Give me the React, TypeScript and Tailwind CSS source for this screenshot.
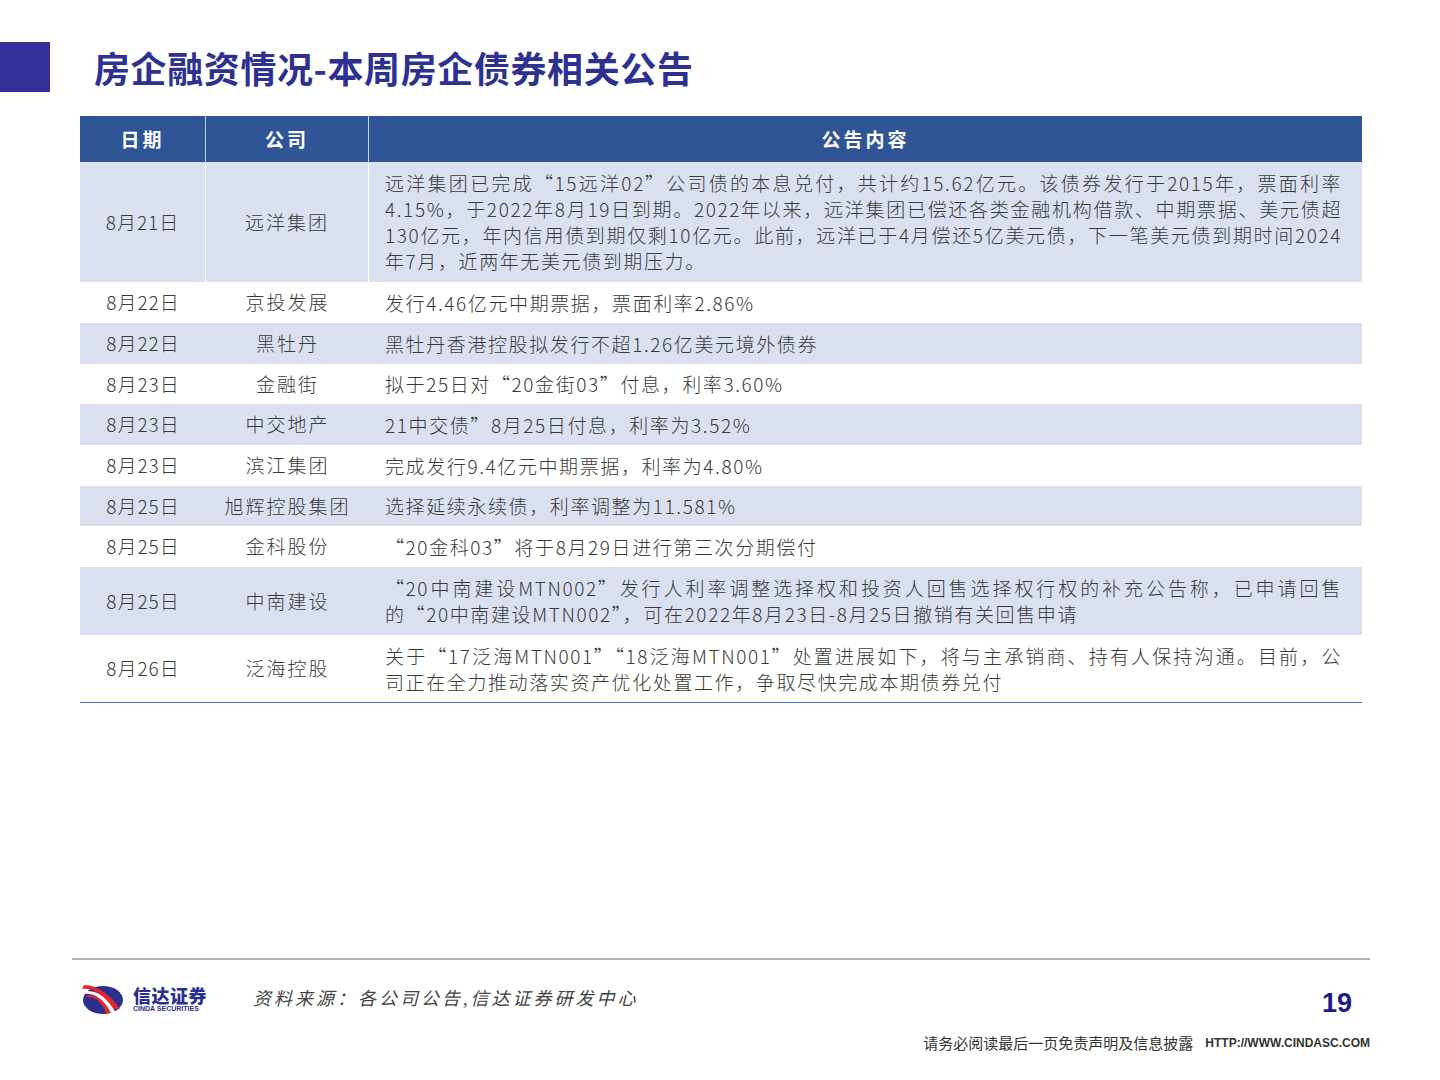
import React from "react";

const rows: [string, string, string[], string][] = [
  ["8月21日", "远洋集团", ["远洋集团已完成“15远洋02”公司债的本息兑付，共计约15.62亿元。该债券发行于2015年，票面利率4.15%，于2022年8月19日到期。2022年以来，远洋集团已偿还各类金融机构借款、中期票据、美元债超130亿元，年内信用债到期仅剩10亿元。此前，远洋已于4月偿还5亿美元债，下一笔美元债到期时间2024年7月，近两年无美元债到期压力。"], "h-[120px]"],
  ["8月22日", "京投发展", ["发行4.46亿元中期票据，票面利率2.86%"], "h-[41px]"],
  ["8月22日", "黑牡丹", ["黑牡丹香港控股拟发行不超1.26亿美元境外债券"], "h-[41px]"],
  ["8月23日", "金融街", ["拟于25日对“20金街03”付息，利率3.60%"], "h-[40px]"],
  ["8月23日", "中交地产", ["21中交债”8月25日付息，利率为3.52%"], "h-[41px]"],
  ["8月23日", "滨江集团", ["完成发行9.4亿元中期票据，利率为4.80%"], "h-[41px]"],
  ["8月25日", "旭辉控股集团", ["选择延续永续债，利率调整为11.581%"], "h-[40px]"],
  ["8月25日", "金科股份", ["“20金科03”将于8月29日进行第三次分期偿付"], "h-[41px]"],
  ["8月25日", "中南建设", ["“20中南建设MTN002”发行人利率调整选择权和投资人回售选择权行权的补充公告称，已申请回售的“20中南建设MTN002”，可在2022年8月23日-8月25日撤销有关回售申请"], "h-[68px]"],
  ["8月26日", "泛海控股", ["关于“17泛海MTN001”“18泛海MTN001”处置进展如下，将与主承销商、持有人保持沟通。目前，公司正在全力推动落实资产优化处置工作，争取尽快完成本期债券兑付"], "h-[67px]"],
];

const cjk = { fontFamily: '"Noto Sans CJK SC", "Noto Sans", sans-serif' };

export default function App() {
  return (
    <div className="relative w-[1440px] h-[1080px] bg-white overflow-hidden" style={cjk}>
      <div className="flex items-center h-[50px] mt-[42px]">
        <div className="w-[50px] h-[50px] bg-[#34309a]" />
        <h1 className="ml-[44px] text-[36px] font-bold text-[#2e3192] tracking-[0.6px] leading-none">房企融资情况-本周房企债券相关公告</h1>
      </div>
      <div className="ml-[80px] mt-[24px] w-[1282px] border-b border-[#4472c4]">
        <div className="flex h-[46px] bg-[#2f5597] text-white text-[19px] font-bold tracking-[3px]">
          <div className="w-[126px] flex items-center justify-center border-r border-[#c9d3e8]">日期</div>
          <div className="w-[163px] flex items-center justify-center border-r border-[#c9d3e8]">公司</div>
          <div className="flex-1 flex items-center justify-center">公告内容</div>
        </div>
        {rows.map((r, i) => (
          <div key={i} className={`flex ${r[3]} ${i % 2 === 0 ? "bg-[#dae0f0]" : "bg-white"} text-[#3a3a3a] text-[19px] font-light`}>
            <div className={`w-[126px] flex items-center justify-center tracking-[1px] ${i === 0 ? "border-r border-white" : ""}`}>{r[0]}</div>
            <div className={`w-[163px] flex items-center justify-center tracking-[2px] ${i === 0 ? "border-r border-white" : ""}`}>{r[1]}</div>
            <div className="flex-1 flex items-center pl-[16px] pr-[20px] leading-[26px] tracking-[1.6px] text-justify">{r[2][0]}</div>
          </div>
        ))}
      </div>
      <div className="absolute left-[72px] top-[958px] w-[1298px] h-[2px] bg-[#b3b3b3]" />
      <div className="absolute left-[80px] top-[983px] flex items-center">
        <svg width="46" height="32" viewBox="0 0 46 32">
          <ellipse cx="23" cy="17" rx="20" ry="14" fill="#2b2f8f" />
          <path d="M2 6 C14 4 24 14 32 26 L40 26 C30 12 18 2 4 2 Z" fill="#e6262e" />
          <path d="M4 11 C16 9 24 18 30 30 L36 30 C28 16 18 7 6 8 Z" fill="#ffffff" />
          <path d="M6 14 C16 13 22 20 26 30 L31 30 C25 18 17 11 7 12 Z" fill="#e6262e" />
        </svg>
        <div className="ml-[7px] flex flex-col items-start w-[82px]">
          <span className="text-[18px] font-black text-[#2b2f8f] leading-[18px] tracking-[0.5px]">信达证券</span>
          <span className="text-[7px] font-bold text-[#2b2f8f] leading-[8px] mt-[1px] whitespace-nowrap" style={{ fontFamily: '"Liberation Sans", sans-serif' }}>CINDA SECURITIES</span>
        </div>
        <span className="ml-[38px] text-[18px] italic text-[#444] tracking-[3px]" style={{ fontFamily: '"Liberation Serif", "Noto Sans CJK SC", serif' }}>资料来源：各公司公告,信达证券研发中心</span>
      </div>
      <div className="absolute left-[1322px] top-[983px] text-[27px] font-bold text-[#1a1a8a]" style={{ fontFamily: '"Liberation Sans", sans-serif' }}>19</div>
      <div className="absolute right-[70px] top-[1032px] flex items-center gap-[12px] text-[#333]">
        <span className="text-[15px]">请务必阅读最后一页免责声明及信息披露</span>
        <span className="text-[12px] font-bold" style={{ fontFamily: '"Liberation Sans", sans-serif' }}>HTTP://WWW.CINDASC.COM</span>
      </div>
    </div>
  );
}
